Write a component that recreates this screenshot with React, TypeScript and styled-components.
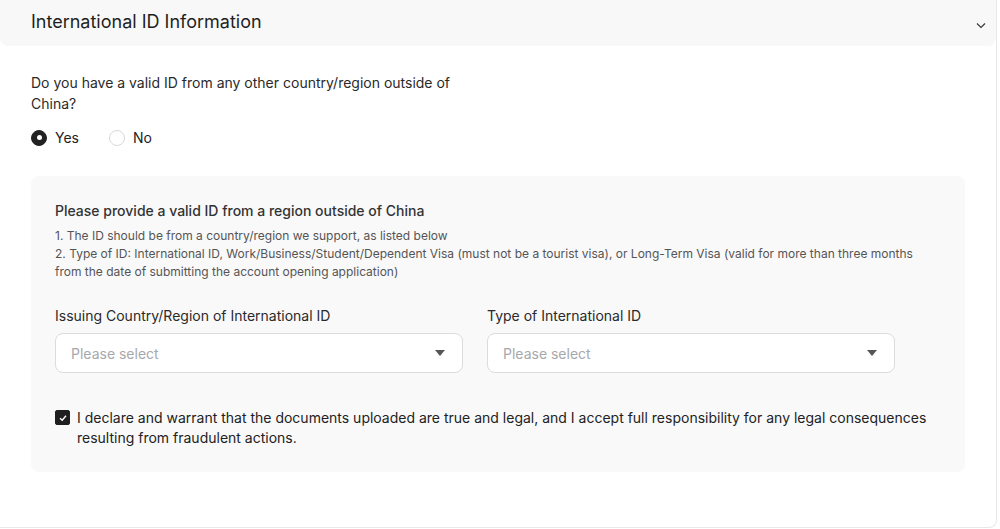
import { FC, useState } from 'react'
import styled, { createGlobalStyle } from 'styled-components';

const GlobalStyle = createGlobalStyle`
  html, body {
    margin: 0;
    padding: 0;
    background: #fff;
  }
  body {
    font-family: Inter, "Noto Sans", sans-serif;
    color: #222;
    -webkit-font-smoothing: antialiased;
  }
`;

const Card = styled.div`
  width: 997px;
  height: 528px;
  box-sizing: border-box;
  border-right: 1px solid #e8e8ea;
  border-bottom: 1px solid #e8e8ea;
  border-bottom-right-radius: 8px;
  background: #fff;
`;

const Header = styled.div`
  height: 46px;
  box-sizing: border-box;
  display: flex;
  align-items: center;
  justify-content: space-between;
  padding: 0 9px 0 31px;
  background: #f8f8f8;
  border-radius: 0 0 8px 8px;
`;

const Title = styled.h2`
  margin: 0 0 4px;
  font-size: 18px;
  font-weight: 400;
  color: #1f1f1f;
`;

const Body = styled.div`
  padding: 26px 31px 0;
`;

const Question = styled.p`
  margin: 0;
  max-width: 430px;
  font-size: 14px;
  line-height: 21px;
  color: #2a2a2a;
`;

const RadioGroup = styled.div`
  display: flex;
  gap: 30px;
  margin-top: 15px;
`;

const RadioItem = styled.label`
  display: flex;
  align-items: center;
  gap: 8px;
  font-size: 14px;
  color: #222;
  cursor: pointer;
`;

const RadioDot = styled.span<{ $checked: boolean }>`
  width: 16px;
  height: 16px;
  box-sizing: border-box;
  border-radius: 50%;
  display: inline-flex;
  align-items: center;
  justify-content: center;
  background: ${(p) => (p.$checked ? '#222' : '#fff')};
  border: 1px solid ${(p) => (p.$checked ? '#222' : '#d9d9d9')};

  &::after {
    content: '';
    width: 5px;
    height: 5px;
    border-radius: 50%;
    background: #fff;
    display: ${(p) => (p.$checked ? 'block' : 'none')};
  }
`;

const Panel = styled.div`
  margin-top: 30px;
  width: 934px;
  box-sizing: border-box;
  background: #f9f9fa;
  border-radius: 8px;
  padding: 25px 24px 24px;
`;

const PanelTitle = styled.div`
  font-size: 14px;
  font-weight: 500;
  color: #333;
  line-height: 20px;
`;

const Notes = styled.div`
  margin-top: 6px;
  font-size: 12px;
  line-height: 18px;
  color: #555;
  max-width: 870px;
`;

const Fields = styled.div`
  display: grid;
  grid-template-columns: 408px 408px;
  gap: 24px;
  margin-top: 25px;
`;

const Field = styled.div`
  display: flex;
  flex-direction: column;
  gap: 7px;
`;

const Label = styled.div`
  font-size: 14px;
  line-height: 20px;
  color: #2a2a2a;
`;

const Select = styled.div`
  height: 40px;
  box-sizing: border-box;
  border: 1px solid #dcdcde;
  border-radius: 8px;
  background: #fff;
  display: flex;
  align-items: center;
  justify-content: space-between;
  padding: 0 16px 0 15px;
  font-size: 14px;
  color: #a8a8ac;
  cursor: pointer;
`;

const Caret = styled.span`
  width: 0;
  height: 0;
  border-left: 5px solid transparent;
  border-right: 5px solid transparent;
  border-top: 6px solid #555;
  margin-right: 1px;
`;

const Declare = styled.label`
  display: flex;
  align-items: flex-start;
  gap: 7px;
  margin-top: 35px;
  font-size: 14px;
  line-height: 20px;
  color: #222;
`;

const Box = styled.span<{ $checked: boolean }>`
  flex: none;
  width: 15px;
  height: 15px;
  margin-top: 2px;
  border-radius: 2px;
  background: ${(p) => (p.$checked ? '#1f1f1f' : '#fff')};
  border: 1px solid ${(p) => (p.$checked ? '#1f1f1f' : '#d9d9d9')};
  box-sizing: border-box;
  display: inline-flex;
  align-items: center;
  justify-content: center;
`;

interface SelectFieldProps {
  label: string,
}

const SelectField: FC<SelectFieldProps> = ({ label }) => (
  <Field>
    <Label>{label}</Label>
    <Select>
      Please select
      <Caret />
    </Select>
  </Field>
);

const App = () => {
  const [hasId, setHasId] = useState<boolean>(true);
  const [agreed, setAgreed] = useState<boolean>(true);

  return (
    <>
      <GlobalStyle />
      <Card>
        <Header>
          <Title>International ID Information</Title>
          <svg width="12" height="12" viewBox="0 0 12 12" fill="none" style={{ marginTop: 3 }}>
            <path d="M2 4.5 L6 8.5 L10 4.5" stroke="#333" strokeWidth="1.1" />
          </svg>
        </Header>
        <Body>
          <Question>Do you have a valid ID from any other country/region outside of China?</Question>
          <RadioGroup>
            <RadioItem onClick={() => setHasId(true)}>
              <RadioDot $checked={hasId} />
              Yes
            </RadioItem>
            <RadioItem onClick={() => setHasId(false)}>
              <RadioDot $checked={!hasId} />
              No
            </RadioItem>
          </RadioGroup>
          <Panel>
            <PanelTitle>Please provide a valid ID from a region outside of China</PanelTitle>
            <Notes>
              <div>1. The ID should be from a country/region we support, as listed below</div>
              <div>2. Type of ID: International ID, Work/Business/Student/Dependent Visa (must not be a tourist visa), or Long-Term Visa (valid for more than three months from the date of submitting the account opening application)</div>
            </Notes>
            <Fields>
              <SelectField label='Issuing Country/Region of International ID' />
              <SelectField label='Type of International ID' />
            </Fields>
            <Declare onClick={() => setAgreed(!agreed)}>
              <Box $checked={agreed}>
                {agreed && (
                  <svg width="10" height="10" viewBox="0 0 10 10" fill="none">
                    <path d="M2 5.2 L4.2 7.2 L8 2.8" stroke="#fff" strokeWidth="1.4" />
                  </svg>
                )}
              </Box>
              <span>I declare and warrant that the documents uploaded are true and legal, and I accept full responsibility for any legal consequences resulting from fraudulent actions.</span>
            </Declare>
          </Panel>
        </Body>
      </Card>
    </>
  )
};

export default App;
